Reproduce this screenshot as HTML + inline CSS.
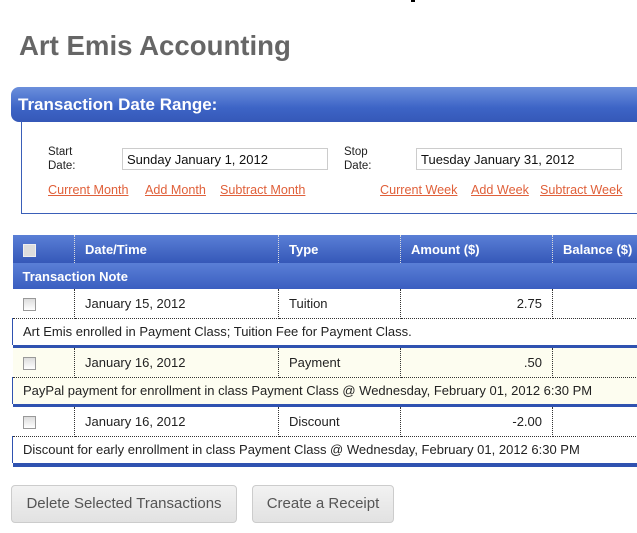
<!DOCTYPE html>
<html><head><style>
*{margin:0;padding:0;box-sizing:border-box}
body{width:637px;height:533px;overflow:hidden;background:#fff;font-family:"Liberation Sans",sans-serif;position:relative}
.abs{position:absolute}
h1{position:absolute;left:19px;top:30px;font-size:27.6px;font-weight:bold;color:#666}
.hdr{left:11px;top:87px;width:640px;height:35px;border-radius:8px 0 0 8px;background:linear-gradient(#6b8fdc,#3d64c6 60%,#3558b8);color:#fff;font-size:17px;font-weight:bold;padding:8px 0 0 7px}
.box{left:21px;top:121px;width:630px;height:93px;border-left:1px solid #3a5fb8;border-bottom:1px solid #3a5fb8}
.lbl{font-size:11.5px;color:#222;line-height:14px}
.inp{height:22px;border:1px solid #ccc;font-size:13px;padding:3px 4px;color:#111}
.lnk{font-size:12.6px;color:#e0603a;text-decoration:underline}
table{position:absolute;left:12px;top:235px;border-collapse:collapse;width:640px;font-size:13px;color:#222}
td{padding:0 10px;border-right:1px dotted #333}
.th td{background:linear-gradient(#5a7fd6,#3558b8);color:#fff;font-weight:bold;height:28px;border-right:1px dotted #ddd}
.nh td{background:linear-gradient(#5a7fd6,#3a5ec0);color:#fff;font-weight:bold;height:26px}
.r td{height:29px;border-bottom:1px dotted #333}
.n td{height:27px;border-right:none}
.sep td{height:3px;background:#2f52b0;padding:0;border:none}
.y td{background:#fdfdf0}
.cb{display:inline-block;width:13px;height:13px;border:1px solid #999;background:linear-gradient(#ddd,#fff);vertical-align:middle}
.th .cb{background:#ddd;border-color:#eee}
.am{text-align:right}
.btn{top:485px;height:38px;border:1px solid #ccc;border-radius:4px;background:linear-gradient(#f2f2f2,#e2e2e2);font-size:15px;color:#555;text-align:center;line-height:36px}
</style></head><body>
<div class="abs" style="left:411px;top:0;width:4px;height:2px;background:#000"></div>
<h1>Art Emis Accounting</h1>
<div class="abs hdr">Transaction Date Range:</div>
<div class="abs box"></div>
<div class="abs lbl" style="left:48px;top:145px">Start<br>Date:</div>
<div class="abs inp" style="left:122px;top:148px;width:206px">Sunday January 1, 2012</div>
<div class="abs lbl" style="left:344px;top:145px">Stop<br>Date:</div>
<div class="abs inp" style="left:416px;top:148px;width:206px">Tuesday January 31, 2012</div>
<div class="abs lnk" style="left:48px;top:183px">Current Month</div>
<div class="abs lnk" style="left:145px;top:183px">Add Month</div>
<div class="abs lnk" style="left:220px;top:183px">Subtract Month</div>
<div class="abs lnk" style="left:380px;top:183px">Current Week</div>
<div class="abs lnk" style="left:471px;top:183px">Add Week</div>
<div class="abs lnk" style="left:540px;top:183px">Subtract Week</div>
<table>
<colgroup><col style="width:62px"><col style="width:204px"><col style="width:122px"><col style="width:152px"><col></colgroup>
<tr class="th"><td><span class="cb"></span></td><td>Date/Time</td><td>Type</td><td>Amount ($)</td><td>Balance ($)</td></tr>
<tr class="nh"><td colspan="5">Transaction Note</td></tr>
<tr class="r"><td><span class="cb"></span></td><td>January 15, 2012</td><td>Tuition</td><td class="am">2.75</td><td></td></tr>
<tr class="n"><td colspan="5" style="border-left:1px solid #2f52b0">Art Emis enrolled in Payment Class; Tuition Fee for Payment Class.</td></tr>
<tr class="sep"><td colspan="5"></td></tr>
<tr class="r y"><td><span class="cb"></span></td><td>January 16, 2012</td><td>Payment</td><td class="am">.50</td><td></td></tr>
<tr class="n y"><td colspan="5" style="border-left:1px solid #2f52b0">PayPal payment for enrollment in class Payment Class @ Wednesday, February 01, 2012 6:30 PM</td></tr>
<tr class="sep"><td colspan="5"></td></tr>
<tr class="r"><td><span class="cb"></span></td><td>January 16, 2012</td><td>Discount</td><td class="am">-2.00</td><td></td></tr>
<tr class="n"><td colspan="5" style="border-left:1px solid #2f52b0">Discount for early enrollment in class Payment Class @ Wednesday, February 01, 2012 6:30 PM</td></tr>
<tr class="sep"><td colspan="5" style="height:4px"></td></tr>
</table>
<div class="abs btn" style="left:11px;width:226px">Delete Selected Transactions</div>
<div class="abs btn" style="left:252px;width:142px">Create a Receipt</div>
</body></html>
